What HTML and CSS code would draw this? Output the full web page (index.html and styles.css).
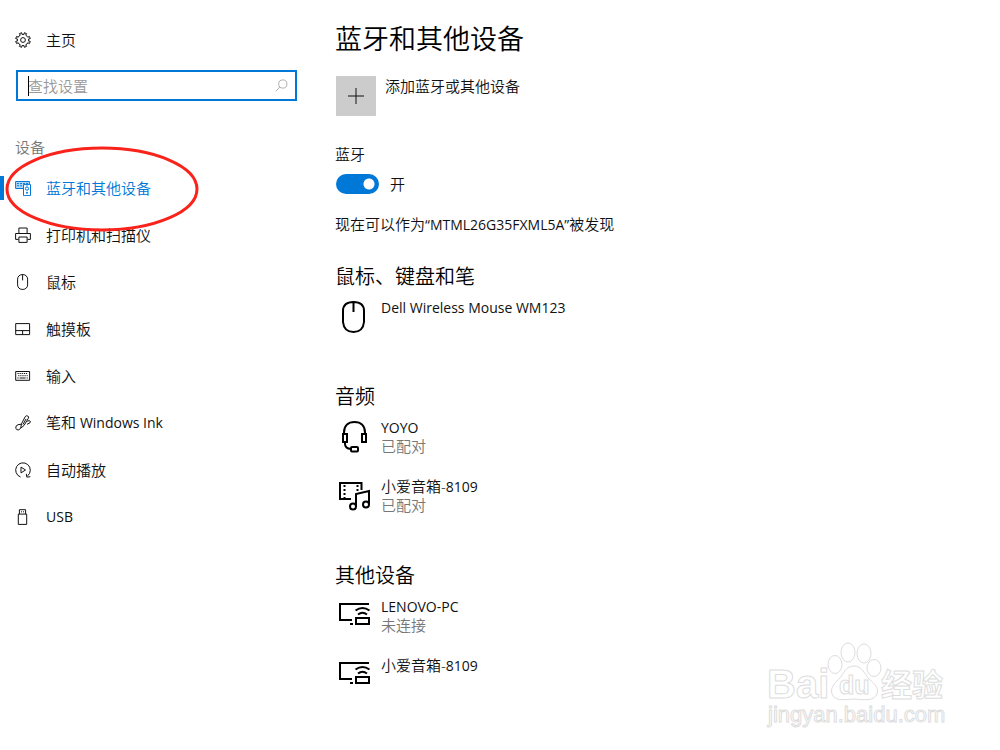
FILE: index.html
```html
<!DOCTYPE html>
<html lang="zh-CN">
<head>
<meta charset="utf-8">
<meta name="viewport" content="width=device-width, initial-scale=1">
<title>蓝牙和其他设备</title>
<link rel="stylesheet" href="styles.css">
</head>
<body>
<div class="settings">
  <aside class="sidebar">
    <a class="nav-link home" href="#">
      <svg class="icon" viewBox="0 0 16 16"><circle cx="8" cy="8" r="2.4"/><path d="M6.6.7 7 2.5 8 2.2 9 2.5 9.4.7 11.6 1.6 10.7 3.2 12 4.2 12.8 5.3 14.4 4.4 15.3 6.6 13.5 7 13.8 8 13.5 9 15.3 9.4 14.4 11.6 12.8 10.7 12 12 10.7 12.8 11.6 14.4 9.4 15.3 9 13.5 8 13.8 7 13.5 6.6 15.3 4.4 14.4 5.3 12.8 4 12 3.2 10.7 1.6 11.6.7 9.4 2.5 9 2.2 8 2.5 7 .7 6.6 1.6 4.4 3.2 5.3 4 4 5.3 3.2 4.4 1.6Z" stroke-linejoin="round"/></svg>
      <span>主页</span>
    </a>
    <form class="search">
      <input class="search-input" type="search" placeholder="查找设置" aria-label="查找设置">
      <span class="caret"></span>
      <button class="search-button" type="button" aria-label="搜索">
        <svg class="search-icon" viewBox="0 0 14 14"><circle cx="8.4" cy="5.4" r="4.4"/><path d="M5.3 8.6.8 13.2"/></svg>
      </button>
    </form>
    <h2 class="group-title">设备</h2>
    <nav class="nav">
      <a class="nav-link active" href="#" aria-current="page">
        <svg class="icon" viewBox="0 0 16 16"><path d="M8 8.500H.6V1.500H14.400V4" fill="#b5d7f3"/><path d="M2 3.600h2M5 3.600h2M8 3.600h2M11 3.600h2M2 5.800h2M5 5.800h2"/><path d="M8.500 4.600h7v11h-7z" fill="#fff"/><circle cx="12" cy="8.600" r="1.600"/><path d="M12 5.400v1M11 12.800h2M12 11.800v2"/></svg>
        <span>蓝牙和其他设备</span>
      </a>
      <a class="nav-link" href="#">
        <svg class="icon" viewBox="0 0 16 16"><path d="M3.9 6.5V1h8.2v5.5M3.500 12.400H.6V6.500h14.800v5.900h-2.900M3.900 10h8.200v5.400H3.900z"/></svg>
        <span>打印机和扫描仪</span>
      </a>
      <a class="nav-link" href="#">
        <svg class="icon" viewBox="0 0 16 16"><rect x="2.600" y=".6" width="10" height="14.800" rx="4.500"/><path d="M7.600.8v5.600"/></svg>
        <span>鼠标</span>
      </a>
      <a class="nav-link" href="#">
        <svg class="icon" viewBox="0 0 16 16"><path d="M.7 2.600h13.900v11H.7zM.7 9.600h13.900M7.600 9.600v4"/></svg>
        <span>触摸板</span>
      </a>
      <a class="nav-link" href="#">
        <svg class="icon" viewBox="0 0 16 16"><path d="M.7 3.500h13.900v8.800H.7z"/><path d="M2.500 5.500h10.500M3.200 7.700h9.500" stroke-dasharray="1.200 .9"/><path d="M2.400 10h1.200M4.600 10h6M11.600 10h1.200"/></svg>
        <span>输入</span>
      </a>
      <a class="nav-link" href="#">
        <svg class="icon" viewBox="0 0 16 16"><path d="M5.700 13.200 6.500 8.800 10.200 1.700Q11.400.1 12.800 1T13.200 3.500L9 10.500ZM8 9.500 11 4M6.300 9.200 3 9.700Q.3 10.700.8 13.200 1.500 15.500 3.800 14.800L5.700 13.200M12.200 6.200l2-.5q2 .2.7 2.200l-2.900 1.400"/></svg>
        <span>笔和 <span class="latin">Windows Ink</span></span>
      </a>
      <a class="nav-link" href="#">
        <svg class="icon" viewBox="0 0 16 16"><path d="M5.500 15A7.300 7.300 0 1 1 12.600 13.800M11.300 11.800l.5 3.300 3.500-.4M6 5.100v5.800L10.500 8Z"/></svg>
        <span>自动播放</span>
      </a>
      <a class="nav-link" href="#">
        <svg class="icon" viewBox="0 0 16 16"><path d="M3.300 5.100h8.400v10.300H3.300zM4.400 5.100V.7h6.200v4.400M6 2.800h1M8 2.800h1"/></svg>
        <span class="latin">USB</span>
      </a>
    </nav>
    <svg class="marker" viewBox="0 0 194 86"><ellipse cx="97" cy="43" rx="95" ry="41"/></svg>
  </aside>

  <main class="content">
    <h1 class="title">蓝牙和其他设备</h1>
    <button class="add" type="button">
      <span class="add-tile"><svg class="plus" viewBox="0 0 16 16"><path d="M8 0v16M0 8h16"/></svg></span>
      <span>添加蓝牙或其他设备</span>
    </button>
    <label class="label" for="bluetooth">蓝牙</label>
    <div class="toggle-row">
      <input class="toggle" id="bluetooth" type="checkbox" role="switch" checked>
      <span>开</span>
    </div>
    <p class="status">现在可以作为<span class="latin">“MTML26G35FXML5A”</span>被发现</p>

    <section class="section">
      <h2 class="section-title">鼠标、键盘和笔</h2>
      <div class="device">
        <svg class="device-icon" viewBox="0 0 34 34"><path d="M5 11Q5 2 15.500 2T26 11V22Q25 32 15.500 32T5 22ZM15.500 2v10"/></svg>
        <div class="device-text"><span class="latin">Dell Wireless Mouse WM123</span></div>
      </div>
    </section>

    <section class="section">
      <h2 class="section-title">音频</h2>
      <div class="device">
        <svg class="device-icon" viewBox="0 0 34 34"><path d="M6 14V12.500C6 6 10 2 16.500 2S27 6 27 12.500V14M5 14h4v8H5zM24 14h4v8h-4zM7 22v2q0 4.500 6 5"/><rect x="13" y="27" width="7" height="4.500" rx="1"/></svg>
        <div class="device-text"><span class="latin">YOYO</span><span class="state">已配对</span></div>
      </div>
      <div class="device">
        <svg class="device-icon" viewBox="0 0 34 34"><path d="M13 20H2V4H23.500V11"/><path d="M6.500 6v13M19.500 6v7" stroke-dasharray="2 2"/><path d="M18 27V15L31 12V25"/><circle cx="15" cy="27.500" r="3"/><circle cx="28" cy="25.500" r="3"/></svg>
        <div class="device-text"><span>小爱音箱-<span class="latin">8109</span></span><span class="state">已配对</span></div>
      </div>
    </section>

    <section class="section">
      <h2 class="section-title">其他设备</h2>
      <div class="device">
        <svg class="device-icon" viewBox="0 0 34 34"><path d="M31 5H2V21H14M12 25h3M18 19h13v6H18z"/><path d="M17.500 11.500q7-5 14 0M20 15.500q4.500-3.500 9 0"/></svg>
        <div class="device-text"><span class="latin">LENOVO-PC</span><span class="state">未连接</span></div>
      </div>
      <div class="device">
        <svg class="device-icon" viewBox="0 0 34 34"><path d="M31 5H2V21H14M12 25h3M18 19h13v6H18z"/><path d="M17.500 11.500q7-5 14 0M20 15.500q4.500-3.500 9 0"/></svg>
        <div class="device-text"><span>小爱音箱-<span class="latin">8109</span></span></div>
      </div>
    </section>
  </main>
</div>

<svg class="watermark" viewBox="0 0 190 92">
  <text class="brand" x="7" y="58">Bai</text>
  <g class="paw"><ellipse cx="75" cy="24.500" rx="7" ry="9"/><ellipse cx="88" cy="12.500" rx="7" ry="9.500"/><ellipse cx="104" cy="13.500" rx="7" ry="9.500"/><ellipse cx="114" cy="28" rx="7" ry="8.500"/><path d="M94 26c8 0 10 7 15 13 6 5 10 9 8 15-3 7-11 6-23 5-12 1-19 2-22-5-2-6 2-10 7-15 5-6 7-13 15-13Z"/></g>
  <text class="du" x="79" y="54">du</text>
  <text class="brand-cn" x="121" y="56">经验</text>
  <text class="site" x="8" y="82">jingyan.baidu.com</text>
</svg>
</body>
</html>
```
FILE: styles.css
```css
* { box-sizing: border-box; }

body {
  margin: 0;
  min-height: 100vh;
  position: relative;
  background: #fff;
  color: #111;
  font: 350 15px/20px "Open Sans", "Noto Sans CJK SC", sans-serif;
}

h1, h2, p { margin: 0; font-weight: inherit; }

.settings {
  display: grid;
  grid-template-columns: 297px minmax(0, 1fr);
  column-gap: 38px;
}

.sidebar { position: relative; padding-top: 16px; }

.nav-link {
  display: flex;
  align-items: center;
  gap: 15px;
  height: 47px;
  padding-left: 15px;
  color: #111;
  text-decoration: none;
}

.active {
  color: #0078d7;
  background: linear-gradient(#0078d7, #0078d7) left center / 4px 24px no-repeat;
}

.icon {
  flex: none;
  width: 16px;
  height: 16px;
  fill: none;
  stroke: currentColor;
  stroke-width: 1;
}

.search {
  display: flex;
  align-items: center;
  position: relative;
  height: 31px;
  margin: 7px 0 0 16px;
  border: 2px solid #0078d7;
}

.search-input {
  flex: 1;
  min-width: 0;
  padding: 0 0 0 10px;
  border: 0;
  outline: 0;
  background: none;
  color: #111;
  font: inherit;
}

.search-input::placeholder { color: #999; opacity: 1; }

.caret {
  position: absolute;
  left: 10px;
  top: 4px;
  width: 1px;
  height: 20px;
  background: #000;
}

.search-button {
  display: flex;
  padding: 0 7px;
  border: 0;
  background: none;
}

.search-icon { width: 13px; height: 13px; fill: none; stroke: #aaa; }

.group-title {
  margin: 36px 0 7px 15px;
  color: #777;
  font-size: 15px;
  line-height: 20px;
}

.marker {
  position: absolute;
  left: 5px;
  top: 146px;
  width: 194px;
  height: 86px;
  fill: none;
  stroke: #f9231b;
  stroke-width: 3;
  pointer-events: none;
}

.content { padding-top: 20px; }

.title { font-size: 27px; line-height: 38px; color: #000; }

.add {
  display: flex;
  align-items: flex-start;
  gap: 9px;
  margin: 18px 0 0 1px;
  padding: 0;
  border: 0;
  background: none;
  color: inherit;
  font: inherit;
}

.add-tile {
  display: grid;
  place-items: center;
  width: 40px;
  height: 40px;
  background: #ccc;
}

.plus { width: 16px; height: 16px; stroke: #111; stroke-width: 1; }

.label { display: block; margin-top: 28px; }

.toggle-row { display: flex; align-items: center; gap: 11px; margin: 10px 0 0 1px; }

.toggle {
  appearance: none;
  width: 43px;
  height: 20px;
  margin: 0;
  border-radius: 10px;
  background: radial-gradient(circle at 33px 10px, #fff 5px, #0078d7 6px);
}

.status { margin-top: 20px; }

.section { margin-top: 29px; padding-bottom: 6px; }

.section-title { font-size: 20px; line-height: 26px; color: #000; }

.device {
  display: flex;
  gap: 9px;
  min-height: 59px;
  padding: 8px 0 0 3px;
}

.device-icon {
  flex: none;
  width: 34px;
  height: 34px;
  margin-top: 2px;
  fill: none;
  stroke: #000;
  stroke-width: 2;
}

.device-text { display: flex; flex-direction: column; line-height: 19px; }

.latin { font-size: 14px; font-weight: 400; }

.state { color: #777; }

.watermark {
  position: absolute;
  left: 760px;
  top: 640px;
  width: 190px;
  height: 92px;
  fill: #fff;
  stroke: #ddd;
  stroke-width: 1;
}

.brand, .du, .site { font-family: "Liberation Sans", sans-serif; font-weight: 700; }
.brand { font-size: 40px; }
.du { font-size: 25px; }
.brand-cn { font: 700 31px "Noto Sans CJK SC", sans-serif; }
.site { font-size: 22px; font-weight: 400; }
```
